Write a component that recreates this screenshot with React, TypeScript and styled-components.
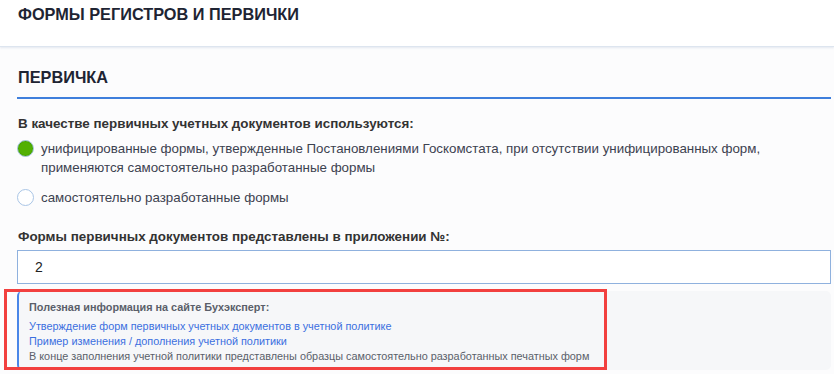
import styled, { createGlobalStyle } from "styled-components";

const GlobalStyle = createGlobalStyle`
  html, body {
    margin: 0;
    padding: 0;
    background: #fcfcfd;
  }
  body {
    font-family: "Liberation Sans", Arial, sans-serif;
    color: #333;
  }
`;

const Page = styled.div`
  width: 834px;
  height: 374px;
  overflow: hidden;
`;

const TopBar = styled.header`
  background: #fff;
  height: 47px;
  padding: 0 0 0 18px;
  border-bottom: 1px solid #dde5ef;
  box-shadow: 0 1px 2px rgba(180, 195, 215, 0.35);
  display: flex;
  align-items: center;
  padding-bottom: 17px;
  box-sizing: border-box;
`;

const PageTitle = styled.h1`
  margin: 0;
  font-size: 16.3px;
  font-weight: 700;
  color: #1e2433;
  text-transform: uppercase;
`;

const Content = styled.main`
  padding: 0 3px 0 17px;
`;

const SectionTitle = styled.h2`
  margin: 0;
  height: 52px;
  padding: 21px 0 0 1px;
  box-sizing: border-box;
  font-size: 16.3px;
  font-weight: 700;
  color: #1e2433;
  border-bottom: 2px solid #3f7fdc;
`;

const Label = styled.div<{ $top: number }>`
  margin-top: ${(p) => p.$top}px;
  padding-left: 1px;
  font-size: 13.4px;
  font-weight: 700;
  color: #333;
  line-height: 18px;
`;

const RadioRow = styled.label<{ $top: number }>`
  display: flex;
  align-items: flex-start;
  gap: 7px;
  margin-top: ${(p) => p.$top}px;
  font-size: 13.33px;
  line-height: 19px;
  color: #3c4250;
`;

const RadioDot = styled.span<{ $checked?: boolean }>`
  flex: none;
  width: 15px;
  height: 15px;
  border-radius: 50%;
  margin-top: 1px;
  border: 1px solid #a9c5e6;
  background: ${(p) => (p.$checked ? "#52b003" : "#fff")};
  box-shadow: ${(p) => (p.$checked ? "inset 0 0 0 1px #4aa600" : "none")};
`;

const Field = styled.div`
  margin-top: 4px;
  height: 34px;
  box-sizing: border-box;
  border: 1px solid #8fb1de;
  background: #fff;
  display: flex;
  align-items: center;
  padding-left: 17px;
  font-size: 14px;
  color: #222;
`;

const InfoWrap = styled.div`
  position: relative;
  margin-top: 7px;
`;

const InfoBox = styled.div`
  background: #f6f7f9;
  border-left: 2px solid #4a86e8;
  border-radius: 5px;
  height: 79px;
  box-sizing: border-box;
  padding: 9px 10px 0 10px;
  font-size: 10.85px;
  line-height: 15px;
`;

const InfoHead = styled.div`
  font-weight: 700;
  color: #5a5f6a;
  margin-bottom: 4px;
`;

const InfoLink = styled.a`
  display: block;
  color: #3b6fe0;
  text-decoration: none;
`;

const InfoNote = styled.div`
  color: #5a5f6a;
`;

const Highlight = styled.div`
  position: absolute;
  left: -13px;
  top: -2px;
  width: 603px;
  height: 81px;
  border: 3px solid #f2403f;
  box-sizing: border-box;
  pointer-events: none;
`;

export default function App() {
  return (
    <Page>
      <GlobalStyle />
      <TopBar>
        <PageTitle>Формы регистров и первички</PageTitle>
      </TopBar>
      <Content>
        <SectionTitle>ПЕРВИЧКА</SectionTitle>
        <Label $top={16}>В качестве первичных учетных документов используются:</Label>
        <RadioRow $top={6}>
          <RadioDot $checked />
          <span>
            унифицированные формы, утвержденные Постановлениями Госкомстата, при отсутствии
            унифицированных форм, применяются самостоятельно разработанные формы
          </span>
        </RadioRow>
        <RadioRow $top={11}>
          <RadioDot />
          <span>самостоятельно разработанные формы</span>
        </RadioRow>
        <Label $top={21}>Формы первичных документов представлены в приложении №:</Label>
        <Field>2</Field>
        <InfoWrap>
          <InfoBox>
            <InfoHead>Полезная информация на сайте Бухэксперт:</InfoHead>
            <InfoLink href="#">Утверждение форм первичных учетных документов в учетной политике</InfoLink>
            <InfoLink href="#">Пример изменения / дополнения учетной политики</InfoLink>
            <InfoNote>
              В конце заполнения учетной политики представлены образцы самостоятельно разработанных печатных форм
            </InfoNote>
          </InfoBox>
          <Highlight />
        </InfoWrap>
      </Content>
    </Page>
  );
}
